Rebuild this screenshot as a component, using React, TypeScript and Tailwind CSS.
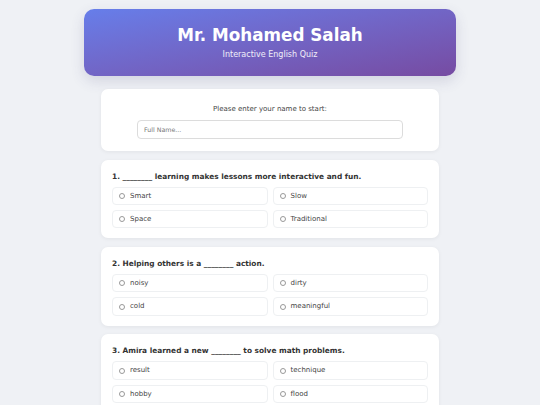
import React, { useState } from 'react';

interface Question {
  text: string;
  options: string[];
}

const questions: Question[] = [
  {
    text: '1. ________ learning makes lessons more interactive and fun.',
    options: ['Smart', 'Slow', 'Space', 'Traditional'],
  },
  {
    text: '2. Helping others is a ________ action.',
    options: ['noisy', 'dirty', 'cold', 'meaningful'],
  },
  {
    text: '3. Amira learned a new ________ to solve math problems.',
    options: ['result', 'technique', 'hobby', 'flood'],
  },
];

const App: React.FC = () => {
  const [name, setName] = useState('');
  const [answers, setAnswers] = useState<Record<number, string>>({});

  return (
    <div
      className="min-h-screen bg-[#eff1f5] pt-[9px] pb-6 text-[#333]"
      style={{ fontFamily: '"DejaVu Sans", Verdana, sans-serif' }}
    >
      <header className="w-[372px] mx-auto h-[67px] rounded-[10px] bg-gradient-to-br from-[#667eea] to-[#764ba2] shadow-[0_5px_14px_rgba(60,60,120,0.16)] flex flex-col items-center justify-center text-white">
        <h1 className="text-[16.8px] leading-[20px] font-bold">Mr. Mohamed Salah</h1>
        <p className="text-[8px] leading-[12px] mt-[4px] text-white/90">Interactive English Quiz</p>
      </header>

      <div className="w-[338px] mx-auto mt-[13px] flex flex-col gap-[8.6px]">
        <section className="bg-white rounded-[7px] shadow-[0_1px_4px_rgba(0,0,0,0.06)] pt-[15px] pb-[12px] px-[36px] flex flex-col items-center">
          <label className="text-[7px] leading-[10px] text-[#444] mb-[6px]">Please enter your name to start:</label>
          <input
            value={name}
            onChange={(e) => setName(e.target.value)}
            placeholder="Full Name..."
            className="w-full h-[19px] border border-[#dcdcdc] rounded-[4px] px-[6px] text-[6.3px] text-[#333] placeholder:text-[#777] outline-none"
          />
        </section>

        {questions.map((q, qi) => (
          <section
            key={qi}
            className="bg-white rounded-[7px] shadow-[0_1px_4px_rgba(0,0,0,0.06)] px-[11px] pt-[11px] pb-[10px]"
          >
            <h3 className="text-[7.4px] leading-[11px] font-bold text-[#333] mb-[5px]">{q.text}</h3>
            <div className="grid grid-cols-2 gap-[5px]">
              {q.options.map((opt) => (
                <label
                  key={opt}
                  className="h-[18.4px] flex items-center gap-[5px] px-[6px] border border-[#eef0f2] rounded-[4px] text-[7px] text-[#444] cursor-pointer"
                >
                  <input
                    type="radio"
                    name={`q${qi}`}
                    checked={answers[qi] === opt}
                    onChange={() => setAnswers({ ...answers, [qi]: opt })}
                    className="appearance-none w-[6px] h-[6px] rounded-full border border-[#999] checked:bg-[#667eea]"
                  />
                  <span>{opt}</span>
                </label>
              ))}
            </div>
          </section>
        ))}
      </div>
    </div>
  );
};

export default App;
